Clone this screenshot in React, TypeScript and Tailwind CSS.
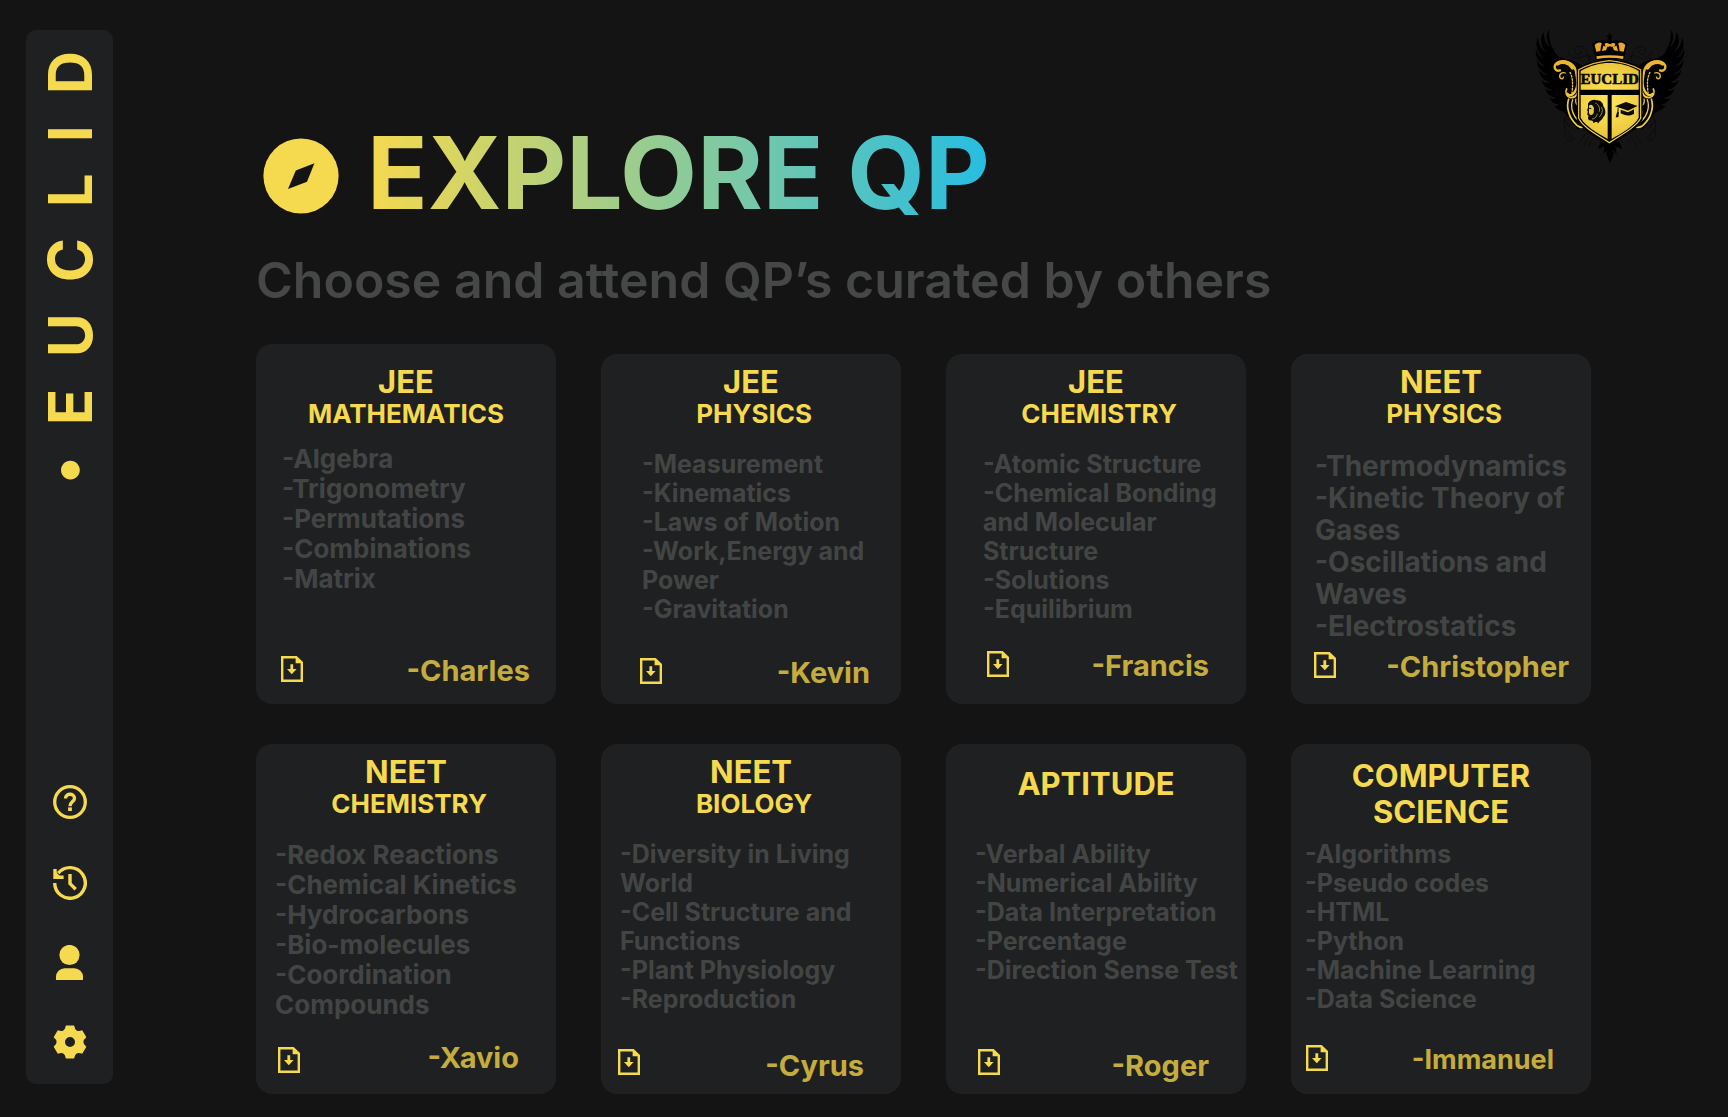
import type { ReactNode } from "react";

type Paper = {
  title: string;
  subtitle?: string;
  topics: string[];
  author: string;
  card?: string;
  heading?: string;
  titleClass?: string;
  list: string;
  footer: string;
  icon?: string;
  authorClass?: string;
};

const papers: Paper[] = [
  {
    title: "JEE",
    subtitle: "MATHEMATICS",
    topics: ["-Algebra", "-Trigonometry", "-Permutations", "-Combinations", "-Matrix"],
    author: "-Charles",
    card: "min-h-[360px] pt-[22px]",
    list: "mt-[14px] pl-[26px] text-[26px] leading-[30px]",
    footer: "pb-4 pl-[25px] pr-[26px]",
  },
  {
    title: "JEE",
    subtitle: " PHYSICS",
    topics: ["-Measurement", "-Kinematics", "-Laws of Motion", "-Work,Energy and Power", "-Gravitation"],
    author: "-Kevin",
    list: "mt-5 pl-[41px] pr-6 text-[25px] leading-[29px]",
    footer: "pb-[14px] pl-[39px] pr-[31px]",
  },
  {
    title: "JEE",
    subtitle: " CHEMISTRY",
    topics: ["-Atomic Structure", "-Chemical Bonding and Molecular Structure", "-Solutions", "-Equilibrium"],
    author: "-Francis",
    list: "mt-5 pl-[37px] pr-6 text-[25px] leading-[29px]",
    footer: "pb-[21px] pl-[41px] pr-[37px]",
  },
  {
    title: "NEET",
    subtitle: " PHYSICS",
    topics: ["-Thermodynamics", "-Kinetic Theory of Gases", "-Oscillations and Waves", "-Electrostatics"],
    author: "-Christopher",
    list: "mt-5 pl-6 pr-5 text-[28px] leading-8",
    footer: "pb-5 pl-[23px] pr-[22px]",
  },
  {
    title: "NEET",
    subtitle: " CHEMISTRY",
    topics: ["-Redox Reactions", "-Chemical Kinetics", "-Hydrocarbons", "-Bio-molecules", "-Coordination Compounds"],
    author: "-Xavio",
    list: "mt-5 pl-[19px] pr-8 text-[26px] leading-[30px]",
    footer: "pb-[19px] pl-[22px] pr-[37px]",
    icon: "mb-0.5",
  },
  {
    title: "NEET",
    subtitle: " BIOLOGY",
    topics: ["-Diversity in Living World", "-Cell Structure and Functions", "-Plant Physiology", "-Reproduction"],
    author: "-Cyrus",
    list: "mt-5 pl-[19px] pr-8 text-[25px] leading-[29px]",
    footer: "pb-[11px] pl-[17px] pr-[37px]",
    icon: "mb-2",
  },
  {
    title: "APTITUDE",
    topics: ["-Verbal Ability", "-Numerical Ability", "-Data Interpretation", "-Percentage", "-Direction Sense Test"],
    author: "-Roger",
    heading: "pt-3",
    list: "mt-5 pl-[29px] text-[25px] leading-[29px]",
    footer: "pb-[11px] pl-8 pr-[37px]",
    icon: "mb-2",
  },
  {
    title: "COMPUTER SCIENCE",
    topics: ["-Algorithms", "-Pseudo codes", "-HTML", "-Python", "-Machine Learning", "-Data Science"],
    author: "-Immanuel",
    heading: "pt-0.5",
    titleClass: "leading-9 px-12",
    list: "mt-5 pl-[14px] text-[25px] leading-[29px]",
    footer: "pb-[17px] pl-[15px] pr-[37px]",
    authorClass: "text-[27px]",
  },
];

const brand = ["•", "E", "U", "C", "L", "I", "D"];

function DownloadIcon() {
  return (
    <svg width="22" height="26" viewBox="0 0 22 26" aria-hidden="true">
      <path d="M1.2 1.2H15.2L20.8 6.6V24.8H1.2Z" fill="none" stroke="currentColor" strokeWidth="2.4" />
      <path d="M14.6 0.6V7.2H21.6Z" fill="currentColor" />
      <path d="M9.4 8.2H12.2V13H15.6L10.8 18.2L6 13H9.4Z" fill="currentColor" />
    </svg>
  );
}

function HelpIcon() {
  return (
    <svg width="34" height="34" viewBox="0 0 34 34" fill="none" stroke="currentColor" strokeWidth="3.3" aria-hidden="true">
      <circle cx="17" cy="17" r="15.3" />
      <path d="M12.5 13.4C12.5 7.9 21.5 7.9 21.5 13.2C21.5 16.5 17 16.8 17 21.3" strokeWidth="3.4" />
      <path d="M17 22.4V26" strokeWidth="3.8" />
    </svg>
  );
}

function HistoryIcon() {
  return (
    <svg width="34" height="36" viewBox="0 -2 34 36" fill="none" stroke="currentColor" strokeWidth="3.4" aria-hidden="true">
      <path d="M1.7 17A15.3 15.3 0 1 0 5.2 7.2" />
      <path d="M2 3V11.2H10.6" />
      <path d="M3 6L8.4 11.4L10.6 13H3Z" fill="currentColor" stroke="none" />
      <path d="M17 8V17.6L22.7 23.3" />
    </svg>
  );
}

function PersonIcon() {
  return (
    <svg width="27" height="35" viewBox="0 0 27 35" fill="currentColor" aria-hidden="true">
      <circle cx="13.5" cy="10" r="10.1" />
      <path d="M0 35V32A8.7 8.7 0 0 1 8.7 23.3H18.3A8.7 8.7 0 0 1 27 32V35Z" />
    </svg>
  );
}

function gearPath() {
  const at = (deg: number, r: number) => {
    const a = (deg * Math.PI) / 180;
    return `${(17 + r * Math.cos(a)).toFixed(2)} ${(17 + r * Math.sin(a)).toFixed(2)}`;
  };
  let d = `M${at(-104, 17)}`;
  for (let i = 0; i < 6; i++) {
    const c = -90 + i * 60;
    d += `L${at(c + 14, 17)}Q${at(c + 21, 13.4)} ${at(c + 30, 13.4)}Q${at(c + 39, 13.4)} ${at(c + 46, 17)}`;
  }
  return `${d}ZM22 17A5 5 0 1 0 12 17A5 5 0 1 0 22 17Z`;
}

function GearIcon() {
  return (
    <svg width="34" height="34" viewBox="0 0 34 34" fill="currentColor" aria-hidden="true">
      <path d={gearPath()} fillRule="evenodd" />
    </svg>
  );
}

function CompassIcon() {
  return (
    <svg className="mt-1.5 size-[90px] shrink-0 text-[#f5d94e]" viewBox="0 0 90 90" aria-hidden="true">
      <circle cx="45" cy="45" r="37.6" fill="currentColor" />
      <path d="M58.4 32.3L39.8 39.5L32 58L51 50.8Z" fill="#141414" />
    </svg>
  );
}

function CrestSide() {
  return (
    <g>
      {/* wing */}
      <path
        fill="#000"
        d="M88 30C76 44 80 66 92 84C76 72 70 54 72 36C58 54 62 78 78 98C62 88 54 70 54 52C44 76 52 100 72 116C58 112 50 98 48 86C44 110 56 130 76 140C62 140 54 130 50 120C50 142 62 156 82 164C70 166 62 158 56 150C60 172 72 182 90 188C78 192 72 186 64 180C70 200 82 208 98 210C88 216 82 212 76 208C84 226 94 232 108 234C100 240 94 238 88 234C98 250 108 254 118 254C114 260 108 260 102 258C112 270 122 274 132 276C150 300 160 320 176 330L186 140C160 112 120 124 106 100C94 82 84 58 88 30Z"
      />
      {/* hairline flourishes */}
      <g fill="none" stroke="#000" strokeWidth="2" opacity="0.65">
        <path d="M208 124C206 98 192 78 174 80C160 82 160 102 174 104C184 104 186 94 178 92" />
        <path d="M216 118C210 106 196 106 186 112C172 118 152 118 142 92" />
        <path d="M140 290C128 310 132 330 146 340C160 350 160 364 148 364C140 362 142 352 148 352" />
        <path d="M128 296L150 324M134 330V352M196 344L172 376M206 350L190 382M218 356L206 378M160 330L132 300" strokeWidth="1.5" />
      </g>
      {/* gold scrollwork */}
      <g fill="none" stroke="url(#crest-gold)" strokeLinecap="round">
        <path d="M120 152C104 158 98 138 112 130C134 118 164 130 168 156C172 180 176 196 166 214C158 230 146 228 142 222" strokeWidth="7" />
        <path d="M112 132C126 122 148 128 158 144" strokeWidth="12" />
        <path d="M136 160C126 156 116 164 120 174C124 180 132 176 130 172" strokeWidth="4" />
        <path d="M150 158C160 176 158 196 156 220" strokeWidth="4" strokeDasharray="5 5" />
        <path d="M140 208C134 218 140 232 152 234C166 234 172 226 174 214" strokeWidth="5" />
        <path d="M146 238C138 262 146 296 172 318C182 326 198 324 200 314C200 306 190 304 186 312" strokeWidth="5" />
        <path d="M158 240C150 262 158 288 176 304" strokeWidth="4" />
        <path d="M168 238C162 254 176 260 184 264C176 268 170 274 176 286C180 294 188 298 194 300" strokeWidth="4" />
      </g>
    </g>
  );
}

function Crest() {
  return (
    <svg className="h-[135px] w-[150px] shrink-0" viewBox="45 25 450 405" role="img" aria-label="Euclid crest">
      <defs>
        <linearGradient id="crest-gold" gradientUnits="userSpaceOnUse" x1="0" y1="60" x2="0" y2="370">
          <stop offset="0" stopColor="#eda227" />
          <stop offset="0.35" stopColor="#ecbf35" />
          <stop offset="1" stopColor="#f5de50" />
        </linearGradient>
        <radialGradient id="crest-face" gradientUnits="userSpaceOnUse" cx="268" cy="240" r="130">
          <stop offset="0" stopColor="#ffe45c" />
          <stop offset="0.6" stopColor="#f3d347" />
          <stop offset="1" stopColor="#e3bd38" />
        </radialGradient>
      </defs>

      <CrestSide />
      <g transform="translate(540 0) scale(-1 1)">
        <CrestSide />
      </g>

      {/* lower finial */}
      <path d="M270 430L258 402L264 388L250 404L254 380L234 388L242 366H298L306 388L286 380L290 404L276 388L282 402Z" fill="#000" />

      {/* crown */}
      <path d="M226 120L216 74C222 64 246 60 262 64L264 52H260V48H266V42H272V48H278V52H274L276 64C294 60 316 64 322 74L312 120Z" fill="#000" />
      <path
        d="M224 76C230 68 240 66 246 72C241 78 243 86 241 94L229 96ZM250 78L262 82L258 92L246 94ZM254 72C259 68 264 70 270 74C276 70 281 68 286 72C286 80 280 84 270 80C260 84 254 80 254 72ZM290 78L278 82L282 92L294 94ZM316 76C310 68 300 66 294 72C299 78 297 86 299 94L311 96Z"
        fill="url(#crest-gold)"
      />
      <path d="M230 114Q270 107 310 114" fill="none" stroke="url(#crest-gold)" strokeWidth="8" />

      {/* shield */}
      <path d="M268 116C300 120 334 128 368 146V300C352 330 310 352 268 378C226 352 184 330 170 300V146C204 128 236 120 268 116Z" fill="#000" />
      <path
        d="M268 123C298 126 332 134 362 150V296C346 324 306 344 268 369C230 344 190 324 176 296V150C206 134 238 126 268 123Z"
        fill="none"
        stroke="url(#crest-gold)"
        strokeWidth="3.5"
      />
      <path d="M182 154C210 138 240 130 268 130C298 130 330 138 356 154V210H182Z" fill="url(#crest-face)" />
      <path d="M182 226H263V358C230 338 196 320 182 294Z" fill="url(#crest-face)" />
      <path d="M275 226H356V294C342 320 308 338 275 358Z" fill="url(#crest-face)" />
      <text
        x="269"
        y="194"
        textAnchor="middle"
        className="font-['Liberation_Serif',serif] font-bold"
        fontSize="45"
        fill="#0b0a05"
        stroke="#0b0a05"
        strokeWidth="2"
      >
        EUCLID
      </text>

      {/* lion head */}
      <path
        d="M204 252C208 242 222 238 230 242C240 240 250 250 250 260C258 270 258 286 250 292C248 300 238 304 234 312C232 304 226 308 220 310C220 302 214 304 208 302C202 298 204 292 206 288C200 286 202 280 204 276C200 274 202 268 204 264Z"
        fill="#0b0a05"
      />
      <path
        d="M207 258C213 252 220 258 222 266C220 272 224 280 218 284C214 288 208 286 207 280Z"
        fill="#e9c940"
      />
      <path
        d="M207 268H213M226 250C236 254 240 264 238 276M244 262C250 272 246 284 238 292M232 282C230 292 224 298 216 298"
        fill="none"
        stroke="#e9c940"
        strokeWidth="2"
      />
      <path d="M206 265L214 267" stroke="#0b0a05" strokeWidth="3" />

      {/* graduation cap */}
      <path d="M285 260L318 247L353 259L324 273Z" fill="#0b0a05" />
      <path d="M302 270L324 278L342 269V282C332 290 312 288 302 281Z" fill="#0b0a05" />
      <path d="M318 260C304 260 294 262 294 268V280" fill="none" stroke="#0b0a05" strokeWidth="3" />
      <path d="M291 278H297L295 293H287Z" fill="#0b0a05" />
      <path d="M288 262L324 275L352 261" fill="none" stroke="#e9c940" strokeWidth="1.5" />
    </svg>
  );
}

function NavButton({ label, children }: { label: string; children: ReactNode }) {
  return (
    <button type="button" aria-label={label} className="flex size-10 items-center justify-center">
      {children}
    </button>
  );
}

function PaperCard({ paper }: { paper: Paper }) {
  return (
    <article className={`flex flex-col rounded-2xl bg-[#1f2021] font-bold ${paper.card ?? "min-h-[350px] pt-3"}`}>
      <h2 className={`h-16 text-center text-[#f5d94e] ${paper.heading ?? ""}`}>
        <span className={`block text-[31px] ${paper.titleClass ?? "leading-8"}`}>{paper.title}</span>
        {paper.subtitle && <span className="block text-[26px] leading-8 whitespace-pre">{paper.subtitle}</span>}
      </h2>
      <ul className={`text-[#434544] ${paper.list}`}>
        {paper.topics.map((topic) => (
          <li key={topic}>{topic}</li>
        ))}
      </ul>
      <div className={`mt-auto flex items-end justify-between ${paper.footer}`}>
        <button type="button" aria-label={`Download ${paper.title}`} className={`text-[#f5d94e] ${paper.icon ?? "mb-1.5"}`}>
          <DownloadIcon />
        </button>
        <p className={`leading-[34px] text-[#c4ac3f] ${paper.authorClass ?? "text-[29px]"}`}>{paper.author}</p>
      </div>
    </article>
  );
}

export default function App() {
  return (
    <div className="flex min-h-screen bg-[#141414] font-['Inter',sans-serif]">
      <aside className="mt-[30px] mb-[33px] ml-[26px] flex w-[87px] shrink-0 flex-col items-center justify-between rounded-[10px] bg-[#1f2021] pt-[21px] pb-[22px] text-[#f5d94e]">
        <p className="flex rotate-180 gap-[31px] text-[60px] leading-[72px] font-bold [font-feature-settings:'case'] [writing-mode:vertical-rl]">
          {brand.map((letter) => (
            <span key={letter}>{letter}</span>
          ))}
        </p>
        <nav className="flex flex-col gap-10">
          <NavButton label="Help">
            <HelpIcon />
          </NavButton>
          <NavButton label="History">
            <HistoryIcon />
          </NavButton>
          <NavButton label="Profile">
            <PersonIcon />
          </NavButton>
          <NavButton label="Settings">
            <GearIcon />
          </NavButton>
        </nav>
      </aside>

      <main className="flex-1 pl-[143px]">
        <header className="flex items-start justify-between pr-[43px]">
          <div className="pt-[113px]">
            <div className="flex items-center gap-[21px]">
              <CompassIcon />
              <h1 className="bg-linear-to-r/srgb from-[#f5d94e] to-[#26bde2] bg-clip-text text-[100px] leading-[120px] font-bold text-transparent">
                EXPLORE QP
              </h1>
            </div>
            <p className="mt-[17px] text-[50px] leading-[60px] font-semibold text-[#464847]">
              Choose and attend QP’s curated by others
            </p>
          </div>
          <div className="pt-7">
            <Crest />
          </div>
        </header>

        <section className="mt-[34px] mr-[137px] grid grid-cols-4 items-end gap-x-[45px] gap-y-10 pb-[23px]">
          {papers.map((paper) => (
            <PaperCard key={paper.title + paper.subtitle} paper={paper} />
          ))}
        </section>
      </main>
    </div>
  );
}
